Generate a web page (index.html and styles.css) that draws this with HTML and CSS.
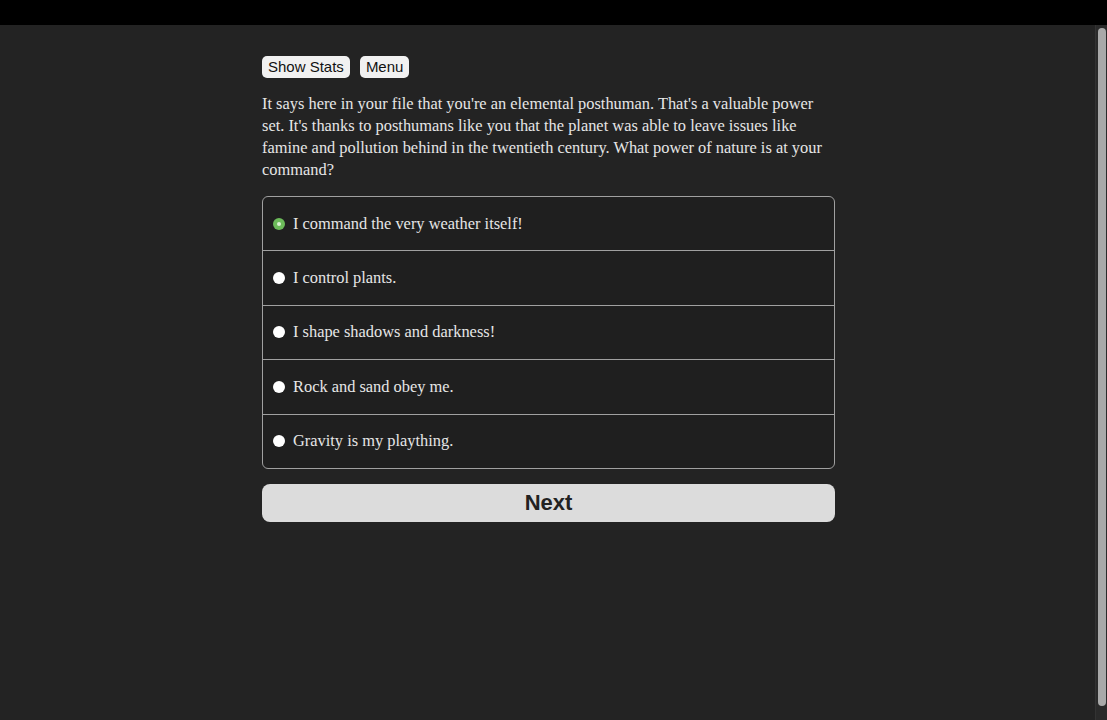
FILE: index.html
```html
<!DOCTYPE html>
<html>
<head>
<meta charset="utf-8">
<link rel="stylesheet" href="styles.css">
</head>
<body>
<div class="topbar"></div>
<div class="frame">
  <div class="page">
    <div class="content">
      <div class="buttons">
        <button class="btn">Show Stats</button>
        <button class="btn">Menu</button>
      </div>
      <p class="story">It says here in your file that you're an elemental posthuman. That's a valuable power set. It's thanks to posthumans like you that the planet was able to leave issues like famine and pollution behind in the twentieth century. What power of nature is at your command?</p>
      <div class="choices">
        <label class="choice"><span class="radio checked"></span><span>I command the very weather itself!</span></label>
        <label class="choice"><span class="radio"></span><span>I control plants.</span></label>
        <label class="choice"><span class="radio"></span><span>I shape shadows and darkness!</span></label>
        <label class="choice"><span class="radio"></span><span>Rock and sand obey me.</span></label>
        <label class="choice"><span class="radio"></span><span>Gravity is my plaything.</span></label>
      </div>
      <button class="next">Next</button>
    </div>
  </div>
  <div class="scrollbar"><div class="thumb"></div></div>
</div>
</body>
</html>
```
FILE: styles.css
```css
html, body {
  margin: 0;
  padding: 0;
  height: 100%;
  background: #232323;
  overflow: hidden;
}
.topbar {
  height: 25px;
  background: #000;
}
.frame {
  display: flex;
  height: 695px;
}
.page {
  flex: 1;
  display: flex;
  justify-content: center;
  padding-left: 2px;
}
.content {
  width: 573px;
  padding-top: 31px;
}
.buttons {
  display: flex;
  gap: 10px;
}
.btn {
  font-family: "Liberation Sans", Arial, sans-serif;
  font-size: 15px;
  height: 22px;
  padding: 0 6px;
  border: none;
  border-radius: 5px;
  background: #f1f1f1;
  color: #111;
  line-height: 22px;
}
.story {
  margin: 15px 0 15px;
  font-family: "Liberation Serif", "Times New Roman", serif;
  font-size: 16.4px;
  line-height: 22px;
  color: #e6e6e6;
}
.choices {
  border: 1px solid #a0a0a0;
  border-radius: 6px;
  background: #1f1f1f;
  overflow: hidden;
}
.choice {
  display: flex;
  align-items: center;
  height: 53.4px;
  padding-left: 10px;
  gap: 8px;
  font-family: "Liberation Serif", "Times New Roman", serif;
  font-size: 16.4px;
  color: #e6e6e6;
  border-top: 1px solid #a0a0a0;
}
.choice:first-child {
  border-top: none;
}
.radio {
  width: 12px;
  height: 12px;
  border-radius: 50%;
  background: #fff;
  flex: none;
  box-sizing: border-box;
}
.radio.checked {
  background: #6cbb5a;
  position: relative;
}
.radio.checked::after {
  content: "";
  position: absolute;
  left: 4px;
  top: 4px;
  width: 4px;
  height: 4px;
  border-radius: 50%;
  background: #d8f0d0;
}
.next {
  display: block;
  width: 100%;
  margin-top: 15px;
  height: 38px;
  padding-top: 2px;
  border: none;
  border-radius: 8px;
  background: #dcdcdc;
  color: #222;
  font-family: "Liberation Sans", Arial, sans-serif;
  font-weight: bold;
  font-size: 22px;
}
.scrollbar {
  width: 12px;
  background: #2a2a2a;
  border-left: 1px solid #333;
  padding: 3px 1px 14px 2px;
  box-sizing: border-box;
}
.thumb {
  height: 100%;
  border-radius: 5px;
  background: #a9a9a9;
}
```
